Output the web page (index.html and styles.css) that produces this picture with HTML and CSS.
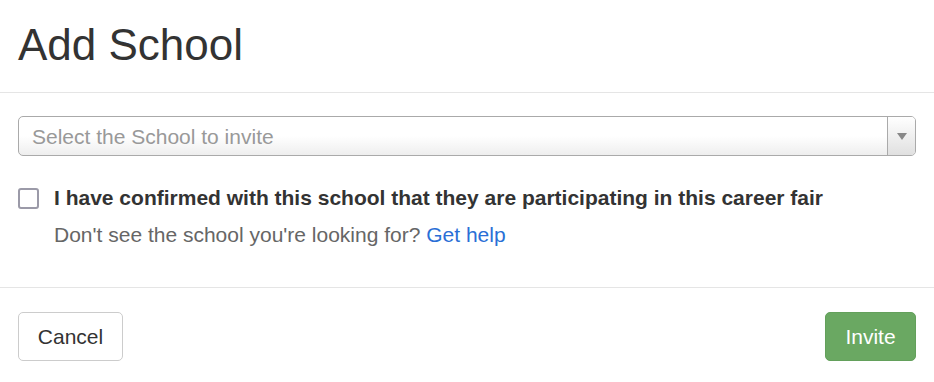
FILE: index.html
```html
<!DOCTYPE html>
<html>
<head>
<meta charset="utf-8">
<link rel="stylesheet" href="styles.css">
</head>
<body>
<div class="modal">
  <header class="modal-header">
    <h1 class="title">Add School</h1>
  </header>
  <section class="modal-body">
    <div class="select">
      <span class="select-placeholder">Select the School to invite</span>
      <span class="select-arrow"><span class="tri"></span></span>
    </div>
    <label class="confirm">
      <span class="checkbox"></span>
      <span class="confirm-text">I have confirmed with this school that they are participating in this career fair</span>
    </label>
    <p class="help">Don't see the school you're looking for? <a class="help-link" href="#">Get help</a></p>
  </section>
  <footer class="modal-footer">
    <button class="btn btn-cancel">Cancel</button>
    <button class="btn btn-invite">Invite</button>
  </footer>
</div>
</body>
</html>
```
FILE: styles.css
```css
* { box-sizing: border-box; }
html, body { margin: 0; padding: 0; background: #fff; }
body {
  font-family: "Liberation Sans", Arial, Helvetica, sans-serif;
  color: #333;
  width: 934px;
  height: 382px;
  overflow: hidden;
}
.modal { width: 934px; }
.modal-header {
  height: 93px;
  border-bottom: 1px solid #e5e5e5;
  padding: 18px 18px 0;
}
.title {
  margin: 0;
  font-size: 44px;
  font-weight: 400;
  line-height: 54px;
  color: #333;
}
.modal-body {
  padding: 23px 18px 0;
  height: 195px;
  border-bottom: 1px solid #e5e5e5;
}
.select {
  display: flex;
  height: 40px;
  border: 1px solid #aaa;
  border-radius: 5px;
  background: linear-gradient(#fff 0%, #fff 50%, #eee 100%);
  overflow: hidden;
}
.select-placeholder {
  flex: 1;
  padding-left: 13px;
  line-height: 39px;
  font-size: 21px;
  color: #999;
}
.select-arrow {
  width: 28px;
  border-left: 1px solid #aaa;
  background: linear-gradient(#fff, #e0e0e0);
  display: flex;
  align-items: center;
  justify-content: center;
}
.tri {
  width: 0; height: 0;
  border-left: 5px solid transparent;
  border-right: 5px solid transparent;
  border-top: 7px solid #888;
}
.confirm {
  display: flex;
  align-items: center;
  margin-top: 30px;
  gap: 15px;
}
.checkbox {
  width: 21px;
  height: 21px;
  border: 2px solid #9b9aa8;
  border-radius: 3px;
  flex: none;
}
.confirm-text {
  font-size: 21px;
  font-weight: 700;
  color: #333;
}
.help {
  margin: 13px 0 0 36px;
  font-size: 21px;
  color: #666;
}
.help-link { color: #2a6fd6; text-decoration: none; }
.modal-footer {
  display: flex;
  justify-content: space-between;
  padding: 24px 18px 0;
}
.btn {
  height: 49px;
  border-radius: 5px;
  font-family: inherit;
  font-size: 21px;
  padding: 0;
}
.btn-cancel {
  width: 105px;
  background: #fff;
  border: 1px solid #ccc;
  color: #333;
}
.btn-invite {
  width: 91px;
  background: #6aa862;
  border: 1px solid #63a05b;
  color: #fff;
}
```
